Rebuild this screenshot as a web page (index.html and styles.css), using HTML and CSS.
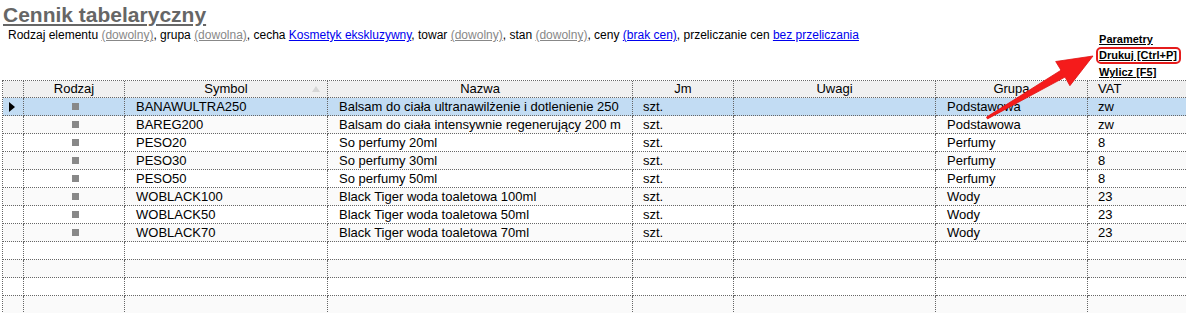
FILE: index.html
```html
<!DOCTYPE html>
<html lang="pl">
<head>
    <meta charset="UTF-8">
    <title>Cennik tabelaryczny</title>
    <link rel="stylesheet" href="styles.css">
</head>
<body>

    <!-- Header: title, filters, actions -->
    <div class="top">
        <div class="top-left">
            <h1 class="title">Cennik tabelaryczny</h1>
            <div class="filters">
                Rodzaj elementu <a class="any">(dowolny)</a>, grupa <a class="any">(dowolna)</a>, cecha <a class="set">Kosmetyk ekskluzywny</a>, towar <a class="any">(dowolny)</a>, stan <a class="any">(dowolny)</a>, ceny <a class="set">(brak cen)</a>, przeliczanie cen <a class="set">bez przeliczania</a>
            </div>
        </div>
        <div class="actions">
            <a class="action">Parametry</a>
            <a class="action highlighted">Drukuj [Ctrl+P]</a>
            <a class="action">Wylicz [F5]</a>
        </div>
    </div>

    <!-- Grid -->
    <div class="grid">
        <div class="row head">
            <div class="cell"></div>
            <div class="cell center">Rodzaj</div>
            <div class="cell center sorted">Symbol<span class="sort"></span></div>
            <div class="cell center">Nazwa</div>
            <div class="cell center">Jm</div>
            <div class="cell center">Uwagi</div>
            <div class="cell center">Grupa</div>
            <div class="cell vat">VAT</div>
        </div>
        <div class="row selected">
            <div class="cell center"><span class="pointer"></span></div>
            <div class="cell center"><span class="kind"></span></div>
            <div class="cell">BANAWULTRA250</div>
            <div class="cell">Balsam do ciała ultranawilżenie i dotlenienie 250</div>
            <div class="cell jm">szt.</div>
            <div class="cell"></div>
            <div class="cell">Podstawowa</div>
            <div class="cell vat">zw</div>
        </div>
        <div class="row">
            <div class="cell"></div>
            <div class="cell center"><span class="kind"></span></div>
            <div class="cell">BAREG200</div>
            <div class="cell">Balsam do ciała intensywnie regenerujący 200 m</div>
            <div class="cell jm">szt.</div>
            <div class="cell"></div>
            <div class="cell">Podstawowa</div>
            <div class="cell vat">zw</div>
        </div>
        <div class="row">
            <div class="cell"></div>
            <div class="cell center"><span class="kind"></span></div>
            <div class="cell">PESO20</div>
            <div class="cell">So perfumy 20ml</div>
            <div class="cell jm">szt.</div>
            <div class="cell"></div>
            <div class="cell">Perfumy</div>
            <div class="cell vat">8</div>
        </div>
        <div class="row">
            <div class="cell"></div>
            <div class="cell center"><span class="kind"></span></div>
            <div class="cell">PESO30</div>
            <div class="cell">So perfumy 30ml</div>
            <div class="cell jm">szt.</div>
            <div class="cell"></div>
            <div class="cell">Perfumy</div>
            <div class="cell vat">8</div>
        </div>
        <div class="row">
            <div class="cell"></div>
            <div class="cell center"><span class="kind"></span></div>
            <div class="cell">PESO50</div>
            <div class="cell">So perfumy 50ml</div>
            <div class="cell jm">szt.</div>
            <div class="cell"></div>
            <div class="cell">Perfumy</div>
            <div class="cell vat">8</div>
        </div>
        <div class="row">
            <div class="cell"></div>
            <div class="cell center"><span class="kind"></span></div>
            <div class="cell">WOBLACK100</div>
            <div class="cell">Black Tiger woda toaletowa 100ml</div>
            <div class="cell jm">szt.</div>
            <div class="cell"></div>
            <div class="cell">Wody</div>
            <div class="cell vat">23</div>
        </div>
        <div class="row">
            <div class="cell"></div>
            <div class="cell center"><span class="kind"></span></div>
            <div class="cell">WOBLACK50</div>
            <div class="cell">Black Tiger woda toaletowa 50ml</div>
            <div class="cell jm">szt.</div>
            <div class="cell"></div>
            <div class="cell">Wody</div>
            <div class="cell vat">23</div>
        </div>
        <div class="row">
            <div class="cell"></div>
            <div class="cell center"><span class="kind"></span></div>
            <div class="cell">WOBLACK70</div>
            <div class="cell">Black Tiger woda toaletowa 70ml</div>
            <div class="cell jm">szt.</div>
            <div class="cell"></div>
            <div class="cell">Wody</div>
            <div class="cell vat">23</div>
        </div>
        <div class="row empty"><div class="cell"></div><div class="cell"></div><div class="cell"></div><div class="cell"></div><div class="cell"></div><div class="cell"></div><div class="cell"></div><div class="cell"></div></div>
        <div class="row empty"><div class="cell"></div><div class="cell"></div><div class="cell"></div><div class="cell"></div><div class="cell"></div><div class="cell"></div><div class="cell"></div><div class="cell"></div></div>
        <div class="row empty"><div class="cell"></div><div class="cell"></div><div class="cell"></div><div class="cell"></div><div class="cell"></div><div class="cell"></div><div class="cell"></div><div class="cell"></div></div>
        <div class="row empty"><div class="cell"></div><div class="cell"></div><div class="cell"></div><div class="cell"></div><div class="cell"></div><div class="cell"></div><div class="cell"></div><div class="cell"></div></div>
    </div>

    <!-- Annotation arrow pointing at the print action -->
    <svg class="arrow" width="1186" height="313" viewBox="0 0 1186 313">
        <polygon points="986.5,117.1 1061,70.2 1055.7,61.5 1093,56 1069.9,85.7 1065,77.1 987.5,118.9" fill="#f51b1b" stroke="#e01010" stroke-width="0.8" stroke-linejoin="round"/>
    </svg>

</body>
</html>
```

FILE: styles.css
```css
body {
    margin: 0;
    font-family: "Liberation Sans", Arial, sans-serif;
    color: #000;
    background: #fff;
    position: relative;
    height: 313px;
    overflow: hidden;
}

/* Header */
.top {
    display: flex;
    justify-content: space-between;
    height: 80px;
}

.title {
    margin: 0;
    padding: 3px 0 0 3px;
    font-size: 21px;
    line-height: 24px;
    font-weight: bold;
    color: #666;
    text-decoration: underline;
}

.filters {
    margin-top: 1px;
    padding-left: 8px;
    font-size: 12px;
    line-height: 14px;
    white-space: nowrap;
}

.filters a {
    text-decoration: underline;
    cursor: pointer;
}

.filters .any {
    color: #888;
}

.filters .set {
    color: #0000ee;
}

.actions {
    display: flex;
    flex-direction: column;
    align-items: flex-start;
    gap: 1px;
    padding-top: 32px;
    margin-right: 5px;
}

.action {
    font-size: 11px;
    line-height: 14px;
    font-weight: bold;
    text-decoration: underline;
    margin-left: 3px;
    cursor: pointer;
}

.action.highlighted {
    margin-left: 0;
    line-height: 13px;
    padding: 0 2px 0 1px;
    border: 2px solid #e51c1c;
    border-radius: 5px;
}

/* Grid */
.grid {
    margin-left: 2px;
    border-left: 1px dotted #666;
    border-top: 1px dotted #666;
    font-size: 13px;
}

.row {
    display: grid;
    grid-template-columns: 21px 101px 203px 305px 101px 202px 152px 1fr;
    height: 18px;
}

.row:nth-child(odd) {
    background: #fafafa;
}

.row.head {
    height: 17px;
    background: #f0f0f0;
}

.row.selected {
    background: #c2dcf3;
}

.cell {
    box-sizing: border-box;
    border-right: 1px dotted #666;
    border-bottom: 1px dotted #666;
    padding-left: 11px;
    line-height: 17px;
    white-space: nowrap;
    overflow: hidden;
    display: flex;
    align-items: center;
}

.row.head .cell {
    line-height: 16px;
}

.cell:last-child {
    border-right: none;
}

.cell.center {
    justify-content: center;
    padding-left: 0;
}

.cell.jm {
    padding-left: 10px;
}

.cell.vat {
    padding-left: 10px;
}

.sorted {
    position: relative;
}

.sort {
    position: absolute;
    right: 7px;
    top: 5px;
    width: 0;
    height: 0;
    border-left: 4px solid transparent;
    border-right: 4px solid transparent;
    border-bottom: 6px solid #d6d6d6;
}

.pointer {
    width: 0;
    height: 0;
    border-top: 5px solid transparent;
    border-bottom: 5px solid transparent;
    border-left: 6px solid #000;
    margin-left: -2px;
}

.kind {
    width: 7px;
    height: 7px;
    background: #888;
    margin-left: 2px;
}

/* Annotation overlay */
.arrow {
    position: absolute;
    top: 0;
    left: 0;
    pointer-events: none;
}
```
